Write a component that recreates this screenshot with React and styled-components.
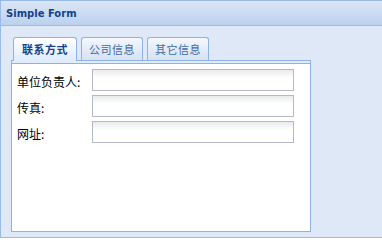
import React, { useState } from "react";
import styled, { createGlobalStyle } from "styled-components";

const GlobalStyle = createGlobalStyle`
  html, body {
    margin: 0;
    padding: 0;
    background: #ffffff;
  }
  body {
    font-family: "DejaVu Sans", "Noto Sans CJK SC", sans-serif;
  }
`;

const Panel = styled.div`
  width: 381px;
  border-left: 1px solid #99bbe8;
  border-top: 1px solid #99bbe8;
  border-bottom: 1px solid #99bbe8;
`;

const Header = styled.div`
  height: 24px;
  display: flex;
  align-items: center;
  padding: 0 5px;
  background: linear-gradient(#dae6f5, #c9dbf2 55%, #bcd1ee);
  border-bottom: 1px solid #99bbe8;
  color: #15428b;
  font-family: "DejaVu Sans", sans-serif;
  font-weight: bold;
  font-size: 10px;
`;

const Body = styled.div`
  height: 211px;
  box-sizing: border-box;
  background: #dfe8f6;
  padding: 11px 0 0 10px;
`;

const TabPanel = styled.div`
  width: 300px;
  display: flex;
  flex-direction: column;
`;

const TabStrip = styled.div`
  display: flex;
  align-items: flex-end;
  gap: 4px;
  padding-left: 2px;
  height: 23px;
  border-bottom: 1px solid #8db2e3;
`;

const Tab = styled.div`
  box-sizing: border-box;
  height: ${(p) => (p.$active ? "24px" : "23px")};
  margin-bottom: ${(p) => (p.$active ? "-1px" : "0")};
  width: ${(p) => p.$w}px;
  display: flex;
  align-items: center;
  justify-content: center;
  padding-bottom: ${(p) => (p.$active ? "1px" : "0")};
  border: 1px solid #8db2e3;
  border-bottom: none;
  border-radius: 3px 3px 0 0;
  background: ${(p) =>
    p.$active
      ? "linear-gradient(#ffffff, #f2f7fe 40%, #deecfd)"
      : "linear-gradient(#f5f8fd, #e3ecf8 50%, #d6e3f4)"};
  color: ${(p) => (p.$active ? "#15428b" : "#416aa3")};
  font-family: "Noto Sans CJK SC", sans-serif;
  font-weight: ${(p) => (p.$active ? "bold" : "normal")};
  font-size: 11px;
  letter-spacing: 0.5px;
  cursor: pointer;
`;

const Spacer = styled.div`
  height: 2px;
  background: #deecfd;
  border: 1px solid #8db2e3;
  border-top: none;
`;

const TabBody = styled.div`
  height: 168px;
  box-sizing: border-box;
  background: #ffffff;
  border: 1px solid #8db2e3;
  border-top: none;
  padding: 5px 0 0 5px;
  display: flex;
  flex-direction: column;
  gap: 4px;
`;

const Row = styled.div`
  display: flex;
  align-items: center;
  height: 22px;
`;

const Label = styled.label`
  width: 75px;
  font-family: "Noto Sans CJK SC", sans-serif;
  font-size: 12px;
  color: #000000;
  padding-top: 2px;
`;

const Input = styled.input`
  box-sizing: border-box;
  width: 202px;
  height: 22px;
  margin: 0;
  padding: 1px 3px;
  border: 1px solid #b5b8c8;
  background: linear-gradient(#e8eaec, #ffffff 8px, #ffffff);
  font-family: "Noto Sans CJK SC", sans-serif;
  font-size: 12px;
  outline: none;
`;

const tabs = [
  { name: "联系方式", w: 64 },
  { name: "公司信息", w: 62 },
  { name: "其它信息", w: 62 },
];

const fields = ["单位负责人:", "传真:", "网址:"];

export default function App() {
  const [active, setActive] = useState(0);
  return (
    <>
      <GlobalStyle />
      <Panel>
        <Header>Simple Form</Header>
        <Body>
          <TabPanel>
            <TabStrip>
              {tabs.map((t, i) => (
                <Tab
                  key={t.name}
                  $w={t.w}
                  $active={i === active}
                  onClick={() => setActive(i)}
                >
                  {t.name}
                </Tab>
              ))}
            </TabStrip>
            <Spacer />
            <TabBody>
              {active === 0 &&
                fields.map((f) => (
                  <Row key={f}>
                    <Label>{f}</Label>
                    <Input type="text" />
                  </Row>
                ))}
            </TabBody>
          </TabPanel>
        </Body>
      </Panel>
    </>
  );
}
